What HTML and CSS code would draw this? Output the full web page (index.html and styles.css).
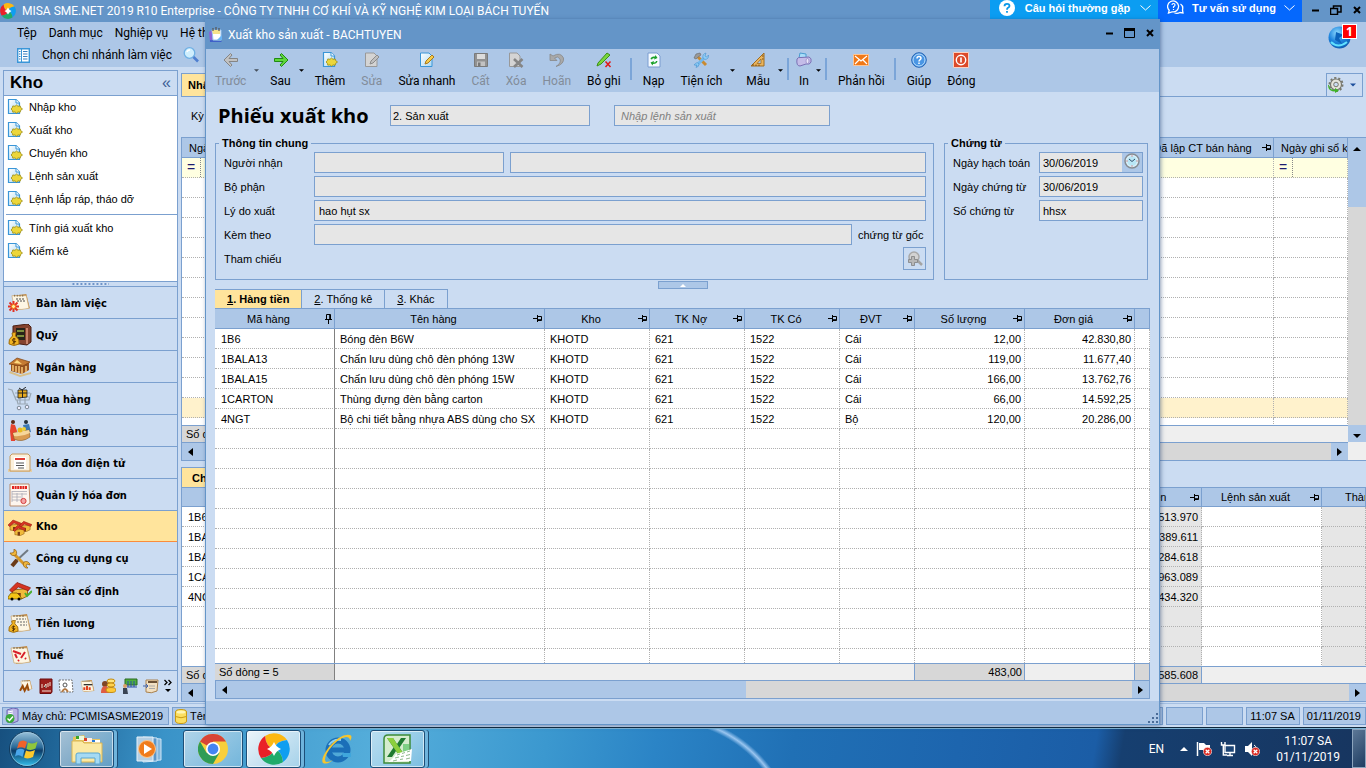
FILE: index.html
```html
<!DOCTYPE html>
<html lang="vi">
<head>
    <meta charset="UTF-8">
    <title>MISA SME.NET 2019 R10 Enterprise</title>
    <link rel="stylesheet" href="styles.css">
</head>
<body>
    <!-- icon sprite -->
    <svg class="sprite" aria-hidden="true">
        <defs>
            <linearGradient id="orb" x1="0" y1="0" x2="0" y2="1"><stop offset="0" stop-color="#9cc4dc"/><stop offset=".45" stop-color="#2a6a98"/><stop offset=".55" stop-color="#0c3c68"/><stop offset="1" stop-color="#35c3f0"/></linearGradient>
            <linearGradient id="docfill" x1="0" y1="0" x2="1" y2="1"><stop offset="0" stop-color="#fff"/><stop offset="1" stop-color="#a9d8f3"/></linearGradient>
            <radialGradient id="globe" cx=".4" cy=".3" r=".8"><stop offset="0" stop-color="#8fdcff"/><stop offset=".5" stop-color="#1d83dd"/><stop offset="1" stop-color="#0a55a8"/></radialGradient>
        </defs>
        <symbol id="misa" viewBox="0 0 32 32">
            <path d="M16 16Q8 14 7 3A16 16 0 0 1 29 7Q18 8 16 16Z" fill="#fcb813"/>
            <path d="M16 16Q8 14 7 3A16 16 0 0 1 29 7Q18 8 16 16Z" fill="#0f9ef0" transform="rotate(90 16 16)"/>
            <path d="M16 16Q8 14 7 3A16 16 0 0 1 29 7Q18 8 16 16Z" fill="#20ab6b" transform="rotate(180 16 16)"/>
            <path d="M16 16Q8 14 7 3A16 16 0 0 1 29 7Q18 8 16 16Z" fill="#ea2127" transform="rotate(270 16 16)"/>
            <path d="M16 9Q18 14 23 16Q18 18 16 23Q14 18 9 16Q14 14 16 9Z" fill="#fff"/>
        </symbol>
        <symbol id="doc-new" viewBox="0 0 16 16">
            <path d="M1.500.500H9L12.500 4V14.500H1.500Z" fill="url(#docfill)" stroke="#3a96d8" stroke-width="1.200"/>
            <path d="M9 .500V4H12.500" fill="#fff" stroke="#3a96d8"/>
            <path d="M9.500 6l1.500 1.300 2.200-.4.500 1.700 1.800 1.400-1.800 1.300-.5 1.900-2.200-.3-1.500 1.300-1.500-1.300-2.200.3-.5-1.900L4 10l1.300-1.400.5-1.700 2.200.4Z" fill="#ecd63a" stroke="#9a8c10" stroke-width=".8"/>
        </symbol>
        <symbol id="pin" viewBox="0 0 10 9">
            <path d="M0 4.500H4M4.500 1V8M4.500 2.500H8.500V6.500H4.500M4.500 5.700H8.500" fill="none" stroke="#000"/>
        </symbol>
        <symbol id="tri-l" viewBox="0 0 5 8"><path d="M5 0V8L0 4Z"/></symbol>
        <symbol id="tri-r" viewBox="0 0 5 8"><path d="M0 0V8L5 4Z"/></symbol>
        <symbol id="tri-u" viewBox="0 0 8 4"><path d="M0 4H8L4 0Z"/></symbol>
        <symbol id="tri-d" viewBox="0 0 8 4"><path d="M0 0H8L4 4Z"/></symbol>
        <symbol id="calendar" viewBox="0 0 24 20">
            <path d="M4 3L19 1L23 17L8 19Z" fill="#c28a45"/>
            <path d="M3 3H19L22 17Q14 19 6 18Z" fill="#fdf6e4" stroke="#c9a671" stroke-width=".7"/>
            <path d="M6 2V4M9 2V4M12 2V4M15 2V4" stroke="#7a6544"/>
        </symbol>
        <symbol id="bag" viewBox="0 0 12 14">
            <path d="M4 1L8 0L7.500 4Q12 7 11 12Q6 15 1 12Q0 7 4.500 4Z" fill="#f0b323" stroke="#8c5b06" stroke-width=".8"/>
            <path d="M7.500 7Q4.500 6 4.500 8T7 9.500T4.500 11.500M6 6V12.500" fill="none" stroke="#5c3500"/>
        </symbol>
        <symbol id="house" viewBox="0 0 14 12">
            <path d="M2 6V11L8 12L12 10V5Z" fill="#f0ba3a" stroke="#8f5d12" stroke-width=".6"/>
            <path d="M5 8H7.500V12H5Z" fill="#7a3c10"/>
            <path d="M0 6L5 1L14 4.500L12.500 6.500L6 4L1.500 7.500Z" fill="#d63422" stroke="#8e1d10" stroke-width=".5"/>
        </symbol>
        <symbol id="badge-x" viewBox="0 0 9 9">
            <circle cx="4.500" cy="4.500" r="4.200" fill="#dc2a22" stroke="#fff" stroke-width=".6"/>
            <path d="M2.700 2.700L6.300 6.300M6.300 2.700L2.700 6.300" stroke="#fff" stroke-width="1.300"/>
        </symbol>
    </svg>

    <header class="titlebar">
        <svg class="app-logo" width="16" height="16"><use href="#misa"/></svg>
        <h1 class="app-title">MISA SME.NET 2019 R10 Enterprise - CÔNG TY TNHH CƠ KHÍ VÀ KỸ NGHỆ KIM LOẠI BÁCH TUYẾN</h1>
        <button class="promo faq">
            <svg width="16" height="16" viewBox="0 0 16 16"><circle cx="8" cy="8" r="8" fill="#fff"/><path d="M5.500 6.200Q5.500 3.800 8 3.800T10.500 6Q10.500 7.200 8.700 8Q8 8.500 8 9.800M8 11V12.800" fill="none" stroke="#0897e8" stroke-width="1.800"/></svg>
            <span>Câu hỏi thường gặp</span>
            <svg width="11" height="6" viewBox="0 0 11 6"><path d="M.500.500L5.500 5L10.500.500" fill="none" stroke="#fff"/></svg>
        </button>
        <button class="promo advice">
            <svg width="17" height="15" viewBox="0 0 17 15"><path d="M1.500 13L2.200 10.300A5.500 5.500 0 1 1 5 11.800Z" fill="none" stroke="#fff" stroke-width="1.300"/><path d="M5 5Q5 3.500 6.500 3.500T8 5Q8 6 6.500 6.800V8M6.500 9V10" fill="none" stroke="#fff" stroke-width="1.200"/><path d="M13.500 4Q16.500 6 15.500 10L16 13L13 12.500Q10.500 14 7.500 13" fill="none" stroke="#fff" stroke-width="1.300"/></svg>
            <span>Tư vấn sử dụng</span>
            <svg width="11" height="6" viewBox="0 0 11 6"><path d="M.500.500L5.500 5L10.500.500" fill="none" stroke="#fff"/></svg>
        </button>
        <div class="win-controls">
            <button aria-label="Thu nhỏ"><svg width="8" height="10" viewBox="0 0 8 10"><path d="M1 5.500H8" stroke="#000" stroke-width="2"/></svg></button>
            <button aria-label="Khôi phục"><svg width="12" height="10" viewBox="0 0 12 10"><path d="M3.500 3V1H11V7H8M.500 3.500H7.500V9.500H.500Z" fill="none" stroke="#000" stroke-width="1.500"/></svg></button>
            <button aria-label="Đóng cửa sổ"><svg width="8" height="8" viewBox="0 0 8 8"><path d="M1 1L7 7M7 1L1 7" stroke="#000" stroke-width="2"/></svg></button>
        </div>
    </header>

    <div class="menu-area">
        <div class="menu-rows">
            <nav class="menubar">
                <a href="#">Tệp</a><a href="#">Danh mục</a><a href="#">Nghiệp vụ</a><a href="#">Hệ thống</a>
            </nav>
            <div class="branch-bar">
                <button>
                    <svg width="13" height="15" viewBox="0 0 13 15"><path d="M.700.700H12.300V14.300H.700Z" fill="#fff" stroke="#3a96d8" stroke-width="1.400"/><path d="M4.500 1V14" stroke="#3a96d8"/><path d="M2 3.500H3.500M2 6H3.500M2 8.500H3.500M2 11H3.500M6 3.500H10.500M6 6H10.500M6 8.500H10.500M6 11H10.500" stroke="#3a7fc0" stroke-width="1.200"/></svg>
                    <span>Chọn chi nhánh làm việc</span>
                </button>
                <button aria-label="Tìm kiếm">
                    <svg width="16" height="16" viewBox="0 0 16 16"><circle cx="6.500" cy="6" r="5.300" fill="#cfeefd" stroke="#6fb0e4" stroke-width="1.300"/><path d="M4 5Q4.500 3 7 3" fill="none" stroke="#fff" stroke-width="1.500"/><path d="M10.500 10L15 14.500" stroke="#4f7fd0" stroke-width="2.600"/></svg>
                </button>
            </div>
        </div>
        <div class="notice">
            <svg width="23" height="23" viewBox="0 0 23 23"><circle cx="11.500" cy="11.500" r="11" fill="url(#globe)"/><path d="M8 6L16 9L11 12L14 18L7 14Z" fill="#0b63bb"/><path d="M3 16Q10 23 19 16" fill="none" stroke="#5fe0ff" stroke-width="2"/></svg>
            <span class="notice-count">1</span>
        </div>
    </div>

    <main class="main">
        <aside class="sidebar">
            <h2 class="side-head">Kho <span>«</span></h2>
            <ul class="side-list">
                <li><a href="#"><svg width="16" height="16"><use href="#doc-new"/></svg>Nhập kho</a></li>
                <li><a href="#"><svg width="16" height="16"><use href="#doc-new"/></svg>Xuất kho</a></li>
                <li><a href="#"><svg width="16" height="16"><use href="#doc-new"/></svg>Chuyển kho</a></li>
                <li><a href="#"><svg width="16" height="16"><use href="#doc-new"/></svg>Lệnh sản xuất</a></li>
                <li><a href="#"><svg width="16" height="16"><use href="#doc-new"/></svg>Lệnh lắp ráp, tháo dỡ</a></li>
                <li class="split"><a href="#"><svg width="16" height="16"><use href="#doc-new"/></svg>Tính giá xuất kho</a></li>
                <li><a href="#"><svg width="16" height="16"><use href="#doc-new"/></svg>Kiểm kê</a></li>
            </ul>
            <div class="side-grip"></div>
            <nav class="side-nav">
                <a href="#"><svg width="24" height="20" viewBox="0 0 24 20"><use href="#calendar" width="24" height="18"/><path d="M8 6H17M9 8H18" stroke="#4a4a4a" stroke-dasharray="2 1"/><path d="M5.500 8V19M0 13.500H11M1.500 9.500L9.500 17.500M9.500 9.500L1.500 17.500" stroke="#e23325" stroke-width="2"/><circle cx="5.500" cy="13.500" r="2" fill="#fff0a0" stroke="#f08010"/></svg>Bàn làm việc</a>
                <a href="#"><svg width="24" height="22" viewBox="0 0 24 22"><path d="M5 2L20 0L23 3V18L19 21L5 19Z" fill="#85432e" stroke="#4c2014"/><path d="M8 4L17 4V16H8Z" fill="#28231a"/><path d="M9 7H16M9 12H16" stroke="#7d8f3d" stroke-width="2"/><path d="M19 4V20" stroke="#c7836b" stroke-width="2"/><use href="#bag" x="0" y="8" width="12" height="14"/></svg>Quỹ</a>
                <a href="#"><svg width="24" height="20" viewBox="0 0 24 20"><path d="M2 14L12 18L23 15V17L12 20L1 16Z" fill="#d9c08a"/><path d="M3 7V14L14 17L21 13V6Z" fill="#9a5420"/><path d="M5 8V14M8 9V15M11 9V16M14 10V17M18 9V15" stroke="#f7c877" stroke-width="1.500"/><path d="M1 7L9 1L22 5L15 9Z" fill="#c57a32" stroke="#7c4010" stroke-width=".7"/><path d="M6 6L9 3L14 7Z" fill="#ffdb80"/></svg>Ngân hàng</a>
                <a href="#"><svg width="24" height="24" viewBox="0 0 24 24"><path d="M0 2L4 3L8 13H21L23 6M7 10H21M9 13L10 17H20M7 6H22M12 6V17M17 6V17" fill="none" stroke="#9aa7b3" stroke-width="1.200"/><path d="M10 3H19V10L10 11Z" fill="#e7aa1d" stroke="#222" stroke-width=".8"/><path d="M14.500 3V11M10 6H19M11 1L14 3L18 0" fill="none" stroke="#222"/><circle cx="11" cy="21" r="1.800" fill="#eef" stroke="#7b8894"/><circle cx="19" cy="20" r="1.800" fill="#eef" stroke="#7b8894"/></svg>Mua hàng</a>
                <a href="#"><svg width="24" height="24" viewBox="0 0 24 24"><circle cx="5" cy="3" r="2" fill="#5b2a16"/><path d="M3 5L7 6L9 12L7 22H3L2 12Z" fill="#e7442e"/><circle cx="18" cy="3" r="2" fill="#24303c"/><path d="M15 6L21 5L23 13L17 14Z" fill="#3c78b4"/><path d="M5 14L21 11L22 18Q14 24 6 20Z" fill="#d99c52" stroke="#8c5a22" stroke-width=".6"/><path d="M5 14L21 11L22 14Q14 18 6 17Z" fill="#f6d79c"/><circle cx="12" cy="11" r="2.500" fill="#e9ba1b"/><circle cx="16" cy="10" r="2" fill="#f0d034"/></svg>Bán hàng</a>
                <a href="#"><svg width="24" height="20" viewBox="0 0 24 20"><path d="M0 16H24V19H0Z" fill="#e4cfa8"/><path d="M2 3L4 1H20L22 3V18H2Z" fill="#fbf0dc" stroke="#c69a5c"/><path d="M6 4H18V16H6Z" fill="#fff"/><path d="M7 6H17" stroke="#e23c34" stroke-width="2"/><path d="M8 10H16M8 12.500H16M10 15H16" stroke="#555" stroke-width="1.200"/></svg>Hóa đơn điện tử</a>
                <a href="#"><svg width="24" height="24" viewBox="0 0 24 24"><path d="M2 1H21L22 20L18 23H2Z" fill="#fdf5ee" stroke="#b98a6a"/><path d="M4 4.500H19" stroke="#e1241e" stroke-width="3" stroke-dasharray="2 .6"/><path d="M4 8.500H19M4 11H19M4 14H13M4 17H13M4 8V19M9 10V19M14 10V17" stroke="#a9a9b5" stroke-width=".8"/><circle cx="15.500" cy="18" r="2.600" fill="#f3a6a6" stroke="#d53c3c"/></svg>Quản lý hóa đơn</a>
                <a href="#" class="current"><svg width="24" height="20" viewBox="0 0 24 20"><use href="#house" x="0" y="2" width="14" height="12"/><use href="#house" x="11" y="3" width="13" height="12"/><use href="#house" x="5" y="7" width="13" height="12"/></svg>Kho</a>
                <a href="#"><svg width="24" height="20" viewBox="0 0 24 20"><path d="M20 1L8 12" stroke="#707a84" stroke-width="2"/><path d="M9 11L4 17" stroke="#6b3b18" stroke-width="4"/><path d="M6 5L17 16" stroke="#d89826" stroke-width="3"/><path d="M2 4A4 4 0 0 0 8 6A4 4 0 0 0 6 0L6 3L4 4ZM20 19L18 17L19 15L22 16A4 4 0 0 0 16 13A4 4 0 0 0 18 19Z" fill="#efb53a" stroke="#8c5a10" stroke-width=".7"/></svg>Công cụ dụng cụ</a>
                <a href="#"><svg width="24" height="20" viewBox="0 0 24 20"><use href="#house" x="1" y="0" width="22" height="18"/><path d="M17 12L19 15L24 10" fill="none" stroke="#4caf30" stroke-width="2"/><path d="M0 16L3 12H9L12 15L14 18H0Z" fill="#f4c416" stroke="#7b5d00" stroke-width=".8"/><circle cx="4" cy="18" r="1.500"/><circle cx="11" cy="18" r="1.500"/></svg>Tài sản cố định</a>
                <a href="#"><svg width="24" height="20" viewBox="0 0 24 20"><use href="#calendar" width="24" height="20"/><path d="M8 6H18M9 9H19M12 12H19" stroke="#666" stroke-dasharray="2 1"/><use href="#bag" x="0" y="7" width="11" height="13"/></svg>Tiền lương</a>
                <a href="#"><svg width="24" height="20" viewBox="0 0 24 20"><use href="#calendar" width="24" height="20"/><path d="M5 6L13 9M7 9L9 13M13 13L17 7M10 16L11 15M17 13L18 14" stroke="#d8202a" stroke-width="2"/></svg>Thuế</a>
            </nav>
            <div class="side-more">
                <svg width="16" height="14" viewBox="0 0 24 20"><use href="#calendar" width="24" height="17"/><path d="M3 17L7 10L10 17L14 9L16 17" fill="none" stroke="#9a4a08" stroke-width="3"/></svg>
                <svg width="14" height="16" viewBox="0 0 14 16"><path d="M1 1H13V14L12 15.500H1Z" fill="#9c1f1d" stroke="#6c0d0d"/><path d="M3 10V6M5 9L7 6V10M9 5V9M11 4V8M3 13H12" stroke="#f3e2d4"/></svg>
                <svg width="16" height="15" viewBox="0 0 16 15"><path d="M1 1H14L15 13H2Z" fill="#fff" stroke="#777" stroke-dasharray="2 1"/><circle cx="7" cy="6" r="2" fill="none" stroke="#555"/><path d="M4 13Q7 7 10 13" fill="none" stroke="#b47a44" stroke-width="2"/></svg>
                <svg width="16" height="14" viewBox="0 0 24 20"><use href="#calendar" width="24" height="20"/><path d="M7 8H20" stroke="#333" stroke-width="2"/><path d="M8 16V12M12 16V10M16 16V12" stroke="#e04020" stroke-width="3"/></svg>
                <svg width="16" height="16" viewBox="0 0 16 16"><circle cx="5" cy="6" r="3" fill="#7e4526"/><path d="M1 15Q1 8 5 8T9 15Z" fill="#df5c43"/><ellipse cx="11" cy="3" rx="4" ry="2" fill="#ffe47a" stroke="#c28b12"/><ellipse cx="11" cy="7" rx="4" ry="2" fill="#ffd24c" stroke="#c28b12"/><ellipse cx="11" cy="12" rx="5" ry="2.500" fill="#ffc938" stroke="#c28b12"/></svg>
                <svg width="17" height="16" viewBox="0 0 17 16"><path d="M4 1H16V7H4Z" fill="#4cae3e" stroke="#2a6a20"/><path d="M6 9H16M7 3V9M10 3V9M13 3V9" stroke="#2d4fa8"/><circle cx="4" cy="8" r="2" fill="#dba06a"/><path d="M2 10H6L7 16H2Z" fill="#3a4454"/></svg>
                <svg width="16" height="15" viewBox="0 0 16 15"><path d="M3 1H15L14 12Q8 15 3 13Z" fill="#f2e0c2" stroke="#a9814e"/><path d="M5 3H14" stroke="#6a5035" stroke-width="2"/><path d="M6 7H12M6 9.500H12" stroke="#aaa"/><path d="M0 7H5M3 5L5 7L3 9" fill="none" stroke="#3e63b0"/></svg>
                <svg width="8" height="14" viewBox="0 0 8 14"><path d="M.500 1L3 3.500L.500 6M4.500 1L7 3.500L4.500 6" fill="none" stroke="#000" stroke-width="1.300"/><path d="M1 10H7L4 13Z"/></svg>
            </div>
        </aside>

        <section class="workspace">
            <div class="doc-tabs">
                <button class="tab active">Nhập, xuất kho</button>
                <button class="tools" aria-label="Tùy chọn">
                    <svg width="16" height="16" viewBox="0 0 16 16"><circle cx="8" cy="7.500" r="5.500" fill="#e5e5dd" stroke="#77776c" stroke-width="1.200"/><circle cx="8" cy="7.500" r="6.600" fill="none" stroke="#77776c" stroke-width="1.800" stroke-dasharray="2.200 1.950"/><circle cx="8" cy="7.500" r="2.300" fill="#cbdcf2" stroke="#77776c"/><path d="M1 8Q1 13 7 13V11L11 13.500L7 16V14.500Q0 14.500 0 8Z" fill="#3fb428"/></svg>
                    <svg width="6" height="4" class="blue"><use href="#tri-d"/></svg>
                </button>
            </div>
            <div class="period">Kỳ</div>
            <div class="list-grid">
                <div class="grid-main">
                    <div class="grid-body">
                        <table class="grid master">
                            <colgroup><col class="w90"><col><col class="w130"><col class="w74"></colgroup>
                            <thead><tr><th class="start">Ngày hạch toán</th><th></th><th>Đã lập CT bán hàng<svg width="10" height="9"><use href="#pin"/></svg></th><th class="start">Ngày ghi sổ kho</th></tr></thead>
                            <tbody>
                                <tr class="filter"><td><span>=</span></td><td></td><td></td><td><span>=</span></td></tr>
                                <tr><td></td><td></td><td></td><td></td></tr>
                                <tr><td></td><td></td><td></td><td></td></tr>
                                <tr><td></td><td></td><td></td><td></td></tr>
                                <tr><td></td><td></td><td></td><td></td></tr>
                                <tr><td></td><td></td><td></td><td></td></tr>
                                <tr><td></td><td></td><td></td><td></td></tr>
                                <tr><td></td><td></td><td></td><td></td></tr>
                                <tr><td></td><td></td><td></td><td></td></tr>
                                <tr><td></td><td></td><td></td><td></td></tr>
                                <tr><td></td><td></td><td></td><td></td></tr>
                                <tr><td></td><td></td><td></td><td></td></tr>
                                <tr class="picked"><td></td><td></td><td></td><td></td></tr>
                                <tr><td></td><td></td><td></td><td></td></tr>
                            </tbody>
                        </table>
                    </div>
                    <div class="sum-bar"><span>Số dòng</span></div>
                    <div class="hscroll"><button aria-label="Cuộn trái"><svg width="5" height="8"><use href="#tri-l"/></svg></button><i></i><button aria-label="Cuộn phải"><svg width="5" height="8"><use href="#tri-r"/></svg></button></div>
                </div>
                <div class="vscroll"><button aria-label="Cuộn lên"><svg width="8" height="4"><use href="#tri-u"/></svg></button><i></i><button aria-label="Cuộn xuống"><svg width="8" height="4"><use href="#tri-d"/></svg></button></div>
            </div>
            <div class="detail">
                <button class="tab active">Chi tiết</button>
                <div class="grid-body">
                    <table class="grid">
                        <colgroup><col class="w90"><col><col class="w110"><col class="w120"><col class="w44"></colgroup>
                        <thead><tr><th></th><th></th><th>Thành tiền<svg width="10" height="9"><use href="#pin"/></svg></th><th>Lệnh sản xuất<svg width="10" height="9"><use href="#pin"/></svg></th><th class="late">Thành phẩm</th></tr></thead>
                        <tbody>
                            <tr><td>1B6</td><td></td><td class="num gray">513.970</td><td></td><td class="gray"></td></tr>
                            <tr><td>1BALA13</td><td></td><td class="num gray">1.389.611</td><td></td><td class="gray"></td></tr>
                            <tr><td>1BALA15</td><td></td><td class="num gray">2.284.618</td><td></td><td class="gray"></td></tr>
                            <tr><td>1CARTON</td><td></td><td class="num gray">963.089</td><td></td><td class="gray"></td></tr>
                            <tr><td>4NGT</td><td></td><td class="num gray">2.434.320</td><td></td><td class="gray"></td></tr>
                            <tr><td></td><td></td><td class="gray"></td><td></td><td class="gray"></td></tr>
                            <tr><td></td><td></td><td class="gray"></td><td></td><td class="gray"></td></tr>
                            <tr><td></td><td></td><td class="gray"></td><td></td><td class="gray"></td></tr>
                        </tbody>
                    </table>
                </div>
                <div class="sum-bar"><span>Số dòng = 5</span><b>7.585.608</b></div>
                <div class="hscroll"><button aria-label="Cuộn trái"><svg width="5" height="8"><use href="#tri-l"/></svg></button><i></i><button aria-label="Cuộn phải"><svg width="5" height="8"><use href="#tri-r"/></svg></button></div>
            </div>
        </section>
    </main>

    <footer class="statusbar">
        <span class="server"><svg width="14" height="16" viewBox="0 0 14 16"><path d="M2 2L8 0L13 1V13L8 15L2 14Z" fill="#b7b2e4" stroke="#6e68b4"/><path d="M3 4L8 3M3 6L8 5" stroke="#fff"/><circle cx="5" cy="10.500" r="4.500" fill="#3aa93a"/><path d="M2.500 10.500L4.500 12.500L8 8.500" fill="none" stroke="#fff" stroke-width="1.400"/></svg>Máy chủ: PC\MISASME2019</span>
        <span class="database"><svg width="12" height="15" viewBox="0 0 12 15"><path d="M.500 3Q.500.500 6 .500T11.500 3V12Q11.500 14.500 6 14.500T.500 12Z" fill="#fbdf62" stroke="#c99a12"/><path d="M.500 7.500Q6 10 11.500 7.500" fill="none" stroke="#c99a12"/><ellipse cx="6" cy="3" rx="4.500" ry="1.600" fill="#fff6b4"/></svg>Tên CSDL: BACHTUYEN</span>
        <span class="num">NUM</span><span class="blank"></span><span class="blank"></span><span class="clock">11:07 SA</span><span class="clock">01/11/2019</span>
    </footer>

    <section class="dialog" role="dialog" aria-labelledby="dlg-title">
        <header class="dlg-title">
            <svg width="14" height="16" viewBox="0 0 14 16"><path d="M0 5L4 3L4 13L1 15Z" fill="#8a62d8"/><path d="M1 13L12 14L13 15H1Z" fill="#3f60c8"/><path d="M3 3H12L12 13H4Z" fill="#fff" stroke="#9cc6ee"/><path d="M8 13L13 8V13Z" fill="#6ab4f4"/><path d="M3 3H11V7H4Z" fill="#f6e28a"/><path d="M4 1V4M7 0V3M10 1V4" stroke="#555" stroke-width="1.200"/></svg>
            <h2 id="dlg-title">Xuất kho sản xuất - BACHTUYEN</h2>
            <div class="win-controls">
                <button aria-label="Thu nhỏ"><svg width="8" height="10" viewBox="0 0 8 10"><path d="M1 5.500H8" stroke="#000" stroke-width="2"/></svg></button>
                <button aria-label="Phóng to"><svg width="11" height="10" viewBox="0 0 11 10"><path d="M.500 1.500H10.500V9.500H.500Z" fill="none" stroke="#000"/><path d="M0 1.500H11" stroke="#000" stroke-width="3"/></svg></button>
                <button aria-label="Đóng cửa sổ"><svg width="8" height="8" viewBox="0 0 8 8"><path d="M1 1L7 7M7 1L1 7" stroke="#000" stroke-width="2"/></svg></button>
            </div>
        </header>
        <div class="toolbar">
            <button disabled><svg width="16" height="16" viewBox="0 0 16 16"><path d="M1 8L7.500 1.500L9 3L6 6.500H14.500V9.500H6L9 13L7.500 14.500Z" fill="#c2c2c2" stroke="#858585"/></svg>Trước</button>
            <i class="drop off"><svg width="5" height="3"><use href="#tri-d"/></svg></i>
            <button><svg width="16" height="16" viewBox="0 0 16 16"><path d="M15 8L8.500 1.500L7 3L10 6.500H1.500V9.500H10L7 13L8.500 14.500Z" fill="#5fd83c" stroke="#218a12"/></svg>Sau</button>
            <i class="drop"><svg width="5" height="3"><use href="#tri-d"/></svg></i>
            <button><svg width="16" height="16"><use href="#doc-new"/></svg>Thêm</button>
            <button disabled><svg width="16" height="16" viewBox="0 0 16 16"><path d="M1.500 1H10L13 4V14.500H1.500Z" fill="#d4d4d4" stroke="#999"/><path d="M6 12L7 9L13 3L15 5L9 11Z" fill="#c0c0c0" stroke="#8c8c8c"/></svg>Sửa</button>
            <button><svg width="16" height="16" viewBox="0 0 16 16"><path d="M1.500 1H10L13 4V14.500H1.500Z" fill="url(#docfill)" stroke="#3a96d8"/><path d="M6 12L7 9L13 3L15 5L9 11Z" fill="#f6cc4c" stroke="#a97a1c"/></svg>Sửa nhanh</button>
            <button disabled><svg width="16" height="16" viewBox="0 0 16 16"><path d="M1.500 1.500H14.500V14.500H1.500Z" fill="#929292" stroke="#7a7a7a"/><path d="M4 2H12V7H4Z" fill="#dcdcdc"/><path d="M4 9.500H12V14H4Z" fill="#c2c2c2"/><path d="M5 10.500H7.500V14H5Z" fill="#777"/></svg>Cất</button>
            <button disabled><svg width="16" height="16" viewBox="0 0 16 16"><path d="M1.500 1H9L12 4V14.500H1.500Z" fill="#d4d4d4" stroke="#999"/><path d="M6 7L14.500 15M14.500 7L6 15" stroke="#858585" stroke-width="2.600"/></svg>Xóa</button>
            <button disabled><svg width="16" height="16" viewBox="0 0 16 16"><path d="M1 2V8.500H8L5.500 6Q9 3.500 11 7Q12.500 11 7 14.500Q15.500 12 14.500 6Q11.500-.500 4 4Z" fill="#a9a9a9" stroke="#888" stroke-width=".8"/></svg>Hoãn</button>
            <button><svg width="16" height="16" viewBox="0 0 16 16"><path d="M1 14L2 11L11 1L14 3L5 12Z" fill="#79d63c" stroke="#3c8f18"/><path d="M9.500 9.500L14.500 15M14.500 9.500L9.500 15" stroke="#e01818" stroke-width="1.500"/></svg><span>Bỏ <u>g</u>hi</span></button>
            <i class="sep"></i>
            <button><svg width="16" height="16" viewBox="0 0 16 16"><path d="M2 1H11L14 4V15H2Z" fill="#f5faff" stroke="#7a9cd0"/><path d="M4.500 7Q5 4 9 4.500L9.500 3L11.500 6L8 7.500L8.500 6Q6 6 6 7.500ZM11.500 9Q11 12 7 12L6.500 13.500L4.500 10.500L8 9L7.500 10.500Q10 10.500 10 9Z" fill="#18a028"/></svg>Nạp</button>
            <button><svg width="16" height="16" viewBox="0 0 16 16"><path d="M5 5L13 13" stroke="#c98a30" stroke-width="3"/><path d="M1 6L3 2L7 1L8 3L5 5L3 7Z" fill="#999" stroke="#666" stroke-width=".6"/><path d="M11 6L3 14" stroke="#72b8ec" stroke-width="3"/><path d="M10 6Q9 2 13 1L12 4L13.500 5L15.500 3Q16 7 12 7.500ZM1 13Q4 9 6 12Q6 15 3 15.500L4 13Z" fill="#8cccf6" stroke="#4a90cc" stroke-width=".6"/></svg>Tiện ích</button>
            <i class="drop"><svg width="5" height="3"><use href="#tri-d"/></svg></i>
            <button><svg width="16" height="16" viewBox="0 0 16 16"><path d="M1 14L14 1V14Z" fill="#eab45c" stroke="#a06c20"/><path d="M7 11.500L11 7V11.500Z" fill="#adc7e7" stroke="#a06c20" stroke-width=".8"/><path d="M3 12V14M6 12.500V14M9 12.500V14M12 4H13.500M12 7H13.500" stroke="#7b4c10"/></svg>Mẫu</button>
            <i class="drop"><svg width="5" height="3"><use href="#tri-d"/></svg></i>
            <i class="sep"></i>
            <button class="narrow"><svg width="16" height="16" viewBox="0 0 16 16"><path d="M3 6L4 1L10 2V7Z" fill="#a9dcf8" stroke="#4a9cd0"/><path d="M1 7Q2 5 5 5.500L13 5Q16 6 15 10Q14 13 10 12L4 14Q0 14 1 7Z" fill="#c4bce8" stroke="#7a70b4"/><ellipse cx="11.500" cy="9" rx="1.500" ry="2.500" fill="#eae6fa" stroke="#8c84c0" stroke-width=".7"/></svg>In</button>
            <i class="drop"><svg width="5" height="3"><use href="#tri-d"/></svg></i>
            <i class="sep"></i>
            <button><svg width="16" height="16" viewBox="0 0 16 16"><path d="M.500 2.500H15.500V13.500H.500Z" fill="#f07818" stroke="#fbc596"/><path d="M2 4L8 9L14 4M2 12L6 8M14 12L10 8" fill="none" stroke="#fff" stroke-width="1.200"/></svg>Phản hồi</button>
            <i class="sep"></i>
            <button><svg width="16" height="16" viewBox="0 0 16 16"><circle cx="8" cy="8" r="7.300" fill="#4a96e4" stroke="#2564b4"/><circle cx="8" cy="8" r="6" fill="none" stroke="#b8dcfa"/><path d="M6 6.500Q6 4.500 8 4.500T10 6.300Q10 7.300 8.700 8Q8 8.500 8 9.500M8 10.500V12" fill="none" stroke="#fff" stroke-width="1.500"/></svg>Giúp</button>
            <button><svg width="16" height="16" viewBox="0 0 16 16"><path d="M.500.500H15.500V15.500H.500Z" fill="#dc4a2a" stroke="#fbd0c0"/><circle cx="8" cy="8" r="4.700" fill="none" stroke="#fff" stroke-width="1.400"/><path d="M8 5.500V10.500" stroke="#fff" stroke-width="1.600"/></svg>Đóng</button>
        </div>
        <form class="dlg-body">
            <div class="voucher-head">
                <h3>Phiếu xuất kho</h3>
                <input class="type" type="text" value="2. Sản xuất" aria-label="Loại phiếu" readonly>
                <input class="order" type="text" placeholder="Nhập lệnh sản xuất" aria-label="Lệnh sản xuất" readonly>
            </div>
            <div class="info">
                <fieldset class="general">
                    <legend>Thông tin chung</legend>
                    <div class="row"><label for="receiver">Người nhận</label><input id="receiver" class="code" type="text" readonly><input type="text" aria-label="Tên người nhận" readonly></div>
                    <div class="row"><label for="dept">Bộ phận</label><input id="dept" type="text" readonly></div>
                    <div class="row"><label for="reason">Lý do xuất</label><input id="reason" type="text" value="hao hụt sx" readonly></div>
                    <div class="row"><label for="attach">Kèm theo</label><input id="attach" type="text" readonly><span class="unit">chứng từ gốc</span></div>
                    <div class="row ref"><label for="ref">Tham chiếu</label>
                        <button type="button" id="ref"><svg width="16" height="16" viewBox="0 0 16 16"><circle cx="7" cy="6" r="5" fill="#d2d2d2" stroke="#a8a8a8" stroke-width="1.500"/><path d="M10.500 9.500L15 14" stroke="#a4a4a4" stroke-width="2.500"/><path d="M4.500 5.500H7.500V8.500H10.500V11.500H7.500V14.500H4.500V11.500H1.500V8.500H4.500Z" fill="#b8b8b8" stroke="#808080" stroke-width=".8"/></svg></button>
                    </div>
                </fieldset>
                <fieldset class="voucher">
                    <legend>Chứng từ</legend>
                    <div class="row"><label for="posted">Ngày hạch toán</label><div class="date"><input id="posted" type="text" value="30/06/2019" readonly><button type="button" aria-label="Chọn giờ"><svg width="16" height="16" viewBox="0 0 16 16"><circle cx="8" cy="8" r="7" fill="#d9f1fa" stroke="#878c92" stroke-width="1.500"/><circle cx="8" cy="8" r="4.800" fill="#b9e6f5"/><path d="M5 6L8 8.500L11 6" fill="none" stroke="#34506a"/><path d="M8 2.500V3.500M8 12.500V13.500M2.500 8H3.500M12.500 8H13.500" stroke="#d04040"/></svg></button></div></div>
                    <div class="row"><label for="dated">Ngày chứng từ</label><input id="dated" type="text" value="30/06/2019" readonly></div>
                    <div class="row"><label for="number">Số chứng từ</label><input id="number" type="text" value="hhsx" readonly></div>
                </fieldset>
            </div>
            <button type="button" class="collapse" aria-label="Thu gọn"><svg width="6" height="3"><use href="#tri-u"/></svg></button>
            <div class="tabs">
                <button type="button" class="active"><u>1</u>. Hàng tiền</button><button type="button"><u>2</u>. Thống kê</button><button type="button"><u>3</u>. Khác</button>
            </div>
            <div class="items">
                <div class="grid-body">
                    <table class="grid">
                        <colgroup><col class="w120"><col><col class="w105"><col class="w95"><col class="w95"><col class="w75"><col class="w110"><col class="w110"><col class="w15"></colgroup>
                        <thead>
                            <tr>
                                <th>Mã hàng<svg width="9" height="10" viewBox="0 0 9 10"><path d="M1 5.500H8M2.500 5.500V.500H6.500V5.500M5.700 .500V5.500M4.500 6V10" fill="none" stroke="#000"/></svg></th>
                                <th>Tên hàng<svg width="10" height="9"><use href="#pin"/></svg></th>
                                <th>Kho<svg width="10" height="9"><use href="#pin"/></svg></th>
                                <th>TK Nợ<svg width="10" height="9"><use href="#pin"/></svg></th>
                                <th>TK Có<svg width="10" height="9"><use href="#pin"/></svg></th>
                                <th>ĐVT<svg width="10" height="9"><use href="#pin"/></svg></th>
                                <th>Số lượng<svg width="10" height="9"><use href="#pin"/></svg></th>
                                <th>Đơn giá<svg width="10" height="9"><use href="#pin"/></svg></th>
                                <th></th>
                            </tr>
                        </thead>
                        <tbody>
                            <tr><td>1B6</td><td>Bóng đèn B6W</td><td>KHOTD</td><td>621</td><td>1522</td><td>Cái</td><td class="num">12,00</td><td class="num">42.830,80</td><td></td></tr>
                            <tr><td>1BALA13</td><td>Chấn lưu dùng chô đèn phóng 13W</td><td>KHOTD</td><td>621</td><td>1522</td><td>Cái</td><td class="num">119,00</td><td class="num">11.677,40</td><td></td></tr>
                            <tr><td>1BALA15</td><td>Chấn lưu dùng chô đèn phóng 15W</td><td>KHOTD</td><td>621</td><td>1522</td><td>Cái</td><td class="num">166,00</td><td class="num">13.762,76</td><td></td></tr>
                            <tr><td>1CARTON</td><td>Thùng đựng đèn bằng carton</td><td>KHOTD</td><td>621</td><td>1522</td><td>Cái</td><td class="num">66,00</td><td class="num">14.592,25</td><td></td></tr>
                            <tr><td>4NGT</td><td>Bộ chi tiết bằng nhựa ABS dùng cho SX</td><td>KHOTD</td><td>621</td><td>1522</td><td>Bộ</td><td class="num">120,00</td><td class="num">20.286,00</td><td></td></tr>
                            <tr><td></td><td></td><td></td><td></td><td></td><td></td><td></td><td></td><td></td></tr>
                            <tr><td></td><td></td><td></td><td></td><td></td><td></td><td></td><td></td><td></td></tr>
                            <tr><td></td><td></td><td></td><td></td><td></td><td></td><td></td><td></td><td></td></tr>
                            <tr><td></td><td></td><td></td><td></td><td></td><td></td><td></td><td></td><td></td></tr>
                            <tr><td></td><td></td><td></td><td></td><td></td><td></td><td></td><td></td><td></td></tr>
                            <tr><td></td><td></td><td></td><td></td><td></td><td></td><td></td><td></td><td></td></tr>
                            <tr><td></td><td></td><td></td><td></td><td></td><td></td><td></td><td></td><td></td></tr>
                            <tr><td></td><td></td><td></td><td></td><td></td><td></td><td></td><td></td><td></td></tr>
                            <tr><td></td><td></td><td></td><td></td><td></td><td></td><td></td><td></td><td></td></tr>
                            <tr><td></td><td></td><td></td><td></td><td></td><td></td><td></td><td></td><td></td></tr>
                            <tr><td></td><td></td><td></td><td></td><td></td><td></td><td></td><td></td><td></td></tr>
                            <tr><td></td><td></td><td></td><td></td><td></td><td></td><td></td><td></td><td></td></tr>
                        </tbody>
                    </table>
                </div>
                <div class="totals"><span class="w120 count">Số dòng = 5</span><span class="rest"></span><span class="w110 sum">483,00</span><span class="w110"></span><span class="w15 end"></span></div>
                <div class="hscroll"><button type="button" aria-label="Cuộn trái"><svg width="5" height="8"><use href="#tri-l"/></svg></button><i></i><button type="button" aria-label="Cuộn phải"><svg width="5" height="8"><use href="#tri-r"/></svg></button></div>
            </div>
        </form>
        <footer class="dlg-foot">
            <svg width="12" height="12" viewBox="0 0 12 12"><path d="M9 1H11V3H9ZM5 5H7V7H5ZM9 5H11V7H9ZM1 9H3V11H1ZM5 9H7V11H5ZM9 9H11V11H9Z" fill="#4a6c98"/></svg>
        </footer>
    </section>

    <footer class="taskbar">
        <button class="start" aria-label="Start">
            <svg width="38" height="38" viewBox="0 0 38 38"><circle cx="19" cy="19" r="17.500" fill="url(#orb)" stroke="#123a5c"/><circle cx="19" cy="19" r="16.500" fill="none" stroke="#a9cfe4" stroke-opacity=".6"/><path d="M11 12Q15 9 19 12L17 18.500Q13 16 9 18.500Z" fill="#f0622a"/><path d="M20 12.500Q25 15 29.500 11.500L27.500 18.500Q23 21 18.500 19Z" fill="#8fc63c"/><path d="M8.500 20Q12.500 17.500 16.500 20L14.500 27Q11 24 7 26.500Z" fill="#4aa6ea"/><path d="M18 20.500Q22.500 22.500 27 20L25 27Q20 29.500 16 27.500Z" fill="#fcc82c"/></svg>
        </button>
        <button class="task stacked" aria-label="Explorer">
            <svg width="34" height="32" viewBox="0 0 34 32"><path d="M3 4L14 2L16 6H30V26H3Z" fill="#e8c560"/><path d="M6 3H14V7H6Z" fill="#eef8dc"/><path d="M6 3H9V6H6Z" fill="#3aa42a"/><path d="M14 5H22V9H14Z" fill="#fdeee8"/><path d="M14 5H17V8H14Z" fill="#d8402c"/><path d="M22 7H30V11H22Z" fill="#fff"/><path d="M22 7H25V9H22Z" fill="#2a7cd8"/><path d="M2 8H12L14 10H32V29H2Z" fill="#fbe9a4" stroke="#d9b552"/><path d="M6 31V22Q6 20 8 20H28Q30 20 30 22V31H25V25H11V31Z" fill="#a5daf4" stroke="#5aa6d0"/></svg>
        </button>
        <button class="task plain" aria-label="Media Player">
            <svg width="28" height="28" viewBox="0 0 28 28"><path d="M10 3L25 4V25L10 26Z" fill="#86b8dc" stroke="#cfe6f6"/><path d="M7 2L21 3V26L7 27Z" fill="#5a96c8" stroke="#cfe6f6"/><path d="M1 2H17V26H1Z" fill="#b4cfe4" stroke="#e6f2fa"/><circle cx="11" cy="14" r="8.500" fill="#f07c1c" stroke="#fbc890"/><path d="M8 9L16 14L8 19Z" fill="#fff"/></svg>
        </button>
        <button class="task" aria-label="Chrome">
            <svg width="30" height="30" viewBox="0 0 30 30"><circle cx="15" cy="15" r="15" fill="#f8cf3c"/><path d="M15 15L2 7.500A15 15 0 0 1 28 7.500H15Z" fill="#d84437"/><path d="M2 7.500A15 15 0 0 0 15 30L21.500 18.700L8.500 18.700Z" fill="#2f9c56"/><circle cx="15" cy="15" r="7" fill="#fff"/><circle cx="15" cy="15" r="5.400" fill="#4484f2"/></svg>
        </button>
        <button class="task stacked on" aria-label="MISA"><svg width="32" height="32"><use href="#misa"/></svg></button>
        <button class="task plain" aria-label="Internet Explorer">
            <svg width="32" height="32" viewBox="0 0 32 32"><circle cx="17" cy="17" r="9.500" fill="none" stroke="#1b6fb8" stroke-width="6"/><path d="M10 17H28" stroke="#1b6fb8" stroke-width="5"/><path d="M21 20H30V24H22Z" fill="#3fa6dc"/><path d="M8 12Q12 6 20 7" fill="none" stroke="#8ad0f4" stroke-width="2"/><path d="M2 30Q-1 26 8 14Q20 0 29 2Q32 3 29 8Q29 4 25 4Q17 5 8 17Q2 26 5 29Q9 29 12 27Q6 32 2 30Z" fill="#f6c52e"/></svg>
        </button>
        <button class="task stacked" aria-label="Excel">
            <svg width="30" height="30" viewBox="0 0 30 30"><path d="M5 1H27V29H1V5Q1 1 5 1Z" fill="#d5ecce" stroke="#3c8a3a" stroke-width="1.500"/><path d="M20 10H26V18H20Z" fill="#7ed085"/><path d="M4 4H10L14 10L18 4H23L16.500 13.500L22 22H16.500L13 17L9 23H4L10.500 13.500Z" fill="#1f7a30"/><path d="M4 4H10L22 22H16.500Z" fill="#8ccf3c"/><path d="M13 20L29 15L28 27L5 28Q9 26 13 20Z" fill="#fff"/><path d="M14 21L17 20M19 19.500L22 18.500M24 18L27 17M12 24L16 23M18 22.500L21 22M23 21.500L27 20.500M10 27L14 26M17 25.500L20 25M23 25L27 24" stroke="#8fb98e"/></svg>
        </button>
        <div class="tray">
            <span class="lang">EN</span>
            <svg width="8" height="4" fill="#fff"><use href="#tri-u"/></svg>
            <svg width="16" height="16" viewBox="0 0 16 16"><path d="M1.500 1V15" stroke="#fff" stroke-width="1.500"/><path d="M3 2H8L10 4H14V10H9L7 9H3Z" fill="#fff"/><use href="#badge-x" x="7" y="6" width="9" height="9"/></svg>
            <svg width="16" height="16" viewBox="0 0 16 16"><path d="M5 4.500H14.500V11.500H5ZM7 14.500H13M10 12V14" fill="#1c4475" stroke="#fff" stroke-width="1.400"/><path d="M1.500 1V4H5V1M3.300 4V14H7" fill="none" stroke="#fff" stroke-width="1.400"/></svg>
            <svg width="16" height="16" viewBox="0 0 16 16"><path d="M1 5H4L8 1V15L4 11H1Z" fill="#fff"/><path d="M10 4Q12 5 12 7" fill="none" stroke="#fff"/><use href="#badge-x" x="7" y="6" width="9" height="9"/></svg>
            <time>11:07 SA<br>01/11/2019</time>
            <button class="peek" aria-label="Show desktop"></button>
        </div>
    </footer>
</body>
</html>
```
FILE: styles.css
```css
* {
    box-sizing: border-box;
}

body {
    margin: 0;
    height: 100vh;
    display: flex;
    flex-direction: column;
    position: relative;
    overflow: hidden;
    background: #cbdcf2;
    color: #000;
    font: 11px/14px "Liberation Sans", Arial, sans-serif;
}

h1, h2, h3, ul {
    margin: 0;
    padding: 0;
    font-weight: normal;
}

button, input {
    font: inherit;
    color: inherit;
    margin: 0;
    padding: 0;
    border: 0;
    background: none;
    border-radius: 0;
}

a {
    color: inherit;
    text-decoration: none;
}

svg {
    flex: none;
}

.sprite {
    position: absolute;
    width: 0;
    height: 0;
}

/* main window title */
.titlebar {
    height: 22px;
    flex: none;
    display: flex;
    align-items: center;
    background: #6495c8;
}

.app-title {
    flex: 1;
    margin-left: 6px;
    color: #fff;
    font: 12px Roboto, "Noto Sans", sans-serif;
    white-space: nowrap;
}

.promo {
    align-self: flex-start;
    display: flex;
    align-items: center;
    justify-content: space-between;
    height: 23px;
    padding: 0 7px 8px 9px;
    color: #fff;
    font-weight: bold;
}

.faq {
    width: 168px;
    background: #0b9df2;
}

.advice {
    width: 144px;
    background: #0568fd;
}

.win-controls {
    display: flex;
    align-items: center;
    gap: 11px;
    padding: 0 5px 3px 9px;
}

.win-controls button {
    display: flex;
}

/* menus */
.menu-area {
    flex: none;
    height: 45px;
    display: flex;
    justify-content: space-between;
    background: #adc7e7;
    font: 12px/22px Roboto, "Noto Sans", sans-serif;
}

.menu-rows {
    padding-left: 17px;
}

.menubar {
    display: flex;
    gap: 12px;
}

.branch-bar {
    display: flex;
    gap: 11px;
}

.branch-bar button {
    display: flex;
    align-items: center;
    gap: 12px;
}

.notice {
    position: relative;
    margin: 4px 15px 0 0;
}

.notice-count {
    position: absolute;
    top: -2px;
    left: 14px;
    width: 15px;
    border: 1px solid #fff;
    background: #f00;
    color: #fff;
    font: bold 12px/13px "Open Sans", sans-serif;
    text-align: center;
}

/* sidebar */
.main {
    flex: 1;
    min-height: 0;
    display: flex;
    gap: 3px;
    padding: 3px 0 1px 3px;
}

.sidebar {
    flex: none;
    width: 175px;
    display: flex;
    flex-direction: column;
    border: 1px solid #7ba0cf;
}

.side-head {
    display: flex;
    justify-content: space-between;
    align-items: center;
    height: 25px;
    padding: 0 6px;
    border-bottom: 1px solid #7ba0cf;
    font: bold 17px "Liberation Sans", Arial, sans-serif;
}

.side-head span {
    color: #3d5f96;
    font: 16px/16px "Liberation Sans", Arial, sans-serif;
}

.side-list {
    flex: 1;
    min-height: 0;
    overflow: hidden;
    background: #fff;
    list-style: none;
}

.side-list a {
    display: flex;
    align-items: center;
    gap: 6px;
    height: 23px;
    padding: 0 0 2px 3px;
}

.side-list .split {
    margin: 3px 0 0 2px;
    border-top: 1px solid #7ba0cf;
    padding-top: 2px;
}

.side-list .split a {
    padding-left: 1px;
}

.side-grip {
    height: 5px;
    border-top: 1px solid #7ba0cf;
    background: linear-gradient(90deg, #6f94c8 2px, #fff 2px, #cbdcf2 3px) center / 4px 2px repeat-x content-box;
    padding: 1px 68px;
}

.side-nav a {
    display: flex;
    align-items: center;
    gap: 4px;
    height: 32px;
    padding: 1px 0 0 4px;
    border-top: 1px solid #7ba0cf;
    font: bold 11px "DejaVu Sans Condensed", "DejaVu Sans", sans-serif;
}

.side-nav .current {
    background: #ffe49c;
    border-bottom: 1px solid #fb8c3c;
}

.side-nav .current + a {
    border-top: 0;
}

.side-more {
    display: flex;
    align-items: center;
    justify-content: flex-end;
    gap: 5px;
    height: 31px;
    padding-right: 5px;
    border-top: 1px solid #7ba0cf;
}

/* workspace behind the dialog */
.workspace {
    flex: 1;
    min-width: 0;
    display: flex;
    flex-direction: column;
    padding-top: 3px;
}

.doc-tabs {
    display: flex;
    justify-content: space-between;
    height: 24px;
    margin-right: 3px;
    border-bottom: 1px solid #7ba0cf;
}

.tab {
    padding: 0 6px;
    border: 1px solid #7ba0cf;
    border-bottom: 0;
    font-weight: bold;
    background: #ffe49c;
}

.tools {
    display: flex;
    align-items: center;
    gap: 6px;
    width: 37px;
    height: 24px;
    padding-left: 1px;
    border: 1px solid #7ba0cf;
}

.blue {
    fill: #1c4f9c;
}

.period {
    height: 40px;
    padding: 12px 10px;
}

.list-grid {
    flex: 1;
    min-height: 0;
    display: flex;
    border: 1px solid #7ba0cf;
    border-right: 0;
}

.grid-main, .detail, .items {
    flex: 1;
    min-width: 0;
    min-height: 0;
    display: flex;
    flex-direction: column;
}

.detail {
    flex: none;
    height: 235px;
    margin-top: 6px;
    border-left: 1px solid #7ba0cf;
    border-bottom: 1px solid #7ba0cf;
}

.detail .tab {
    align-self: flex-start;
    height: 20px;
    padding: 0 10px;
    border-left: 0;
}

.detail .grid-body {
    border-top: 1px solid #7ba0cf;
}

.grid-body {
    flex: 1;
    min-height: 0;
    overflow: hidden;
    background: #fff;
}

.grid {
    width: 100%;
    table-layout: fixed;
    border-collapse: separate;
    border-spacing: 0;
}

.grid th {
    position: relative;
    height: 20px;
    padding: 0 16px 0 4px;
    border-right: 1px solid #7ba0cf;
    border-bottom: 1px solid #7ba0cf;
    background: #adc7e7;
    font-weight: normal;
    white-space: nowrap;
    overflow: hidden;
}

.detail .grid th {
    height: 19px;
}

.grid th svg {
    position: absolute;
    top: 5px;
    right: 1px;
}

.grid .start, .grid .late {
    padding: 0 0 0 7px;
    text-align: left;
}

.grid .late {
    padding-left: 23px;
}

.grid td {
    height: 20px;
    padding: 0 5px;
    border-right: 1px dotted #b0b0b0;
    border-bottom: 1px dotted #b0b0b0;
    white-space: nowrap;
    overflow: hidden;
}

.grid td:first-child {
    padding-left: 6px;
}

.grid .num {
    padding: 0 3px;
    text-align: right;
}

.grid .gray {
    background: #e6e6e6;
}

.grid .filter td {
    background: #ffffe1;
    color: #1c1c70;
    padding: 0;
}

.filter span {
    display: block;
    width: 19px;
    height: 19px;
    padding-left: 5px;
    border-right: 1px dotted #888;
    font-size: 14px;
    line-height: 19px;
}

.grid .picked td {
    background: #fff2cc;
}

.w15 { width: 15px; }
.w44 { width: 44px; }
.w74 { width: 74px; }
.w75 { width: 75px; }
.w90 { width: 90px; }
.w95 { width: 95px; }
.w105 { width: 105px; }
.w110 { width: 110px; }
.w120 { width: 120px; }
.w130 { width: 130px; }

.sum-bar {
    display: flex;
    justify-content: space-between;
    height: 18px;
    border-top: 1px solid #7ba0cf;
    border-bottom: 1px solid #7ba0cf;
    background: #efefef;
    line-height: 17px;
}

.sum-bar span, .sum-bar b {
    width: 110px;
    padding: 0 4px;
    background: #d7d7d7;
    font-weight: normal;
}

.sum-bar b {
    margin-right: 164px;
    padding: 0 3px;
    border-right: 1px solid #7ba0cf;
    text-align: right;
}

.hscroll {
    display: flex;
    height: 17px;
    background: #d7d7d7;
}

.hscroll button {
    width: 17px;
    background: #adc7e7;
}

.hscroll i {
    width: 52%;
    margin-right: auto;
    background: #adc7e7;
}

.vscroll {
    width: 18px;
    display: flex;
    flex-direction: column;
    padding-bottom: 18px;
    background: linear-gradient(#d7d7d7, #d7d7d7) content-box, #efefef;
}

.vscroll button {
    height: 17px;
    background: #adc7e7;
}

.vscroll i {
    height: 52px;
    margin-bottom: auto;
    background: #adc7e7;
}

/* status bar */
.statusbar {
    flex: none;
    display: flex;
    gap: 3px;
    height: 25px;
    padding: 3px 0 2px 2px;
    border-bottom: 1px solid #10283c;
    border-top: 1px solid #a4bfe2;
}

.statusbar span {
    display: flex;
    align-items: center;
    gap: 3px;
    padding: 0 2px;
    border: 1px solid #7ba0cf;
    background: #adc7e7;
    white-space: nowrap;
}

.statusbar .server {
    width: 167px;
}

.statusbar .database {
    flex: 1;
}

.statusbar .blank {
    width: 37px;
}

.statusbar .clock {
    padding: 0 4px 0 3px;
}

/* stock-out dialog */
.dialog {
    position: absolute;
    top: 19px;
    left: 205px;
    right: 206px;
    bottom: 43px;
    display: flex;
    flex-direction: column;
    border: 1px solid #6495c8;
    background: #cbdcf2;
    box-shadow: 1px 1px 4px rgba(30, 60, 110, .5);
}

.dlg-title {
    display: flex;
    align-items: center;
    gap: 5px;
    height: 29px;
    padding-left: 3px;
    background: #6495c8;
    color: #fff;
}

.dlg-title h2 {
    flex: 1;
    font: 12px Roboto, "Noto Sans", sans-serif;
}

.toolbar {
    display: flex;
    height: 43px;
    padding: 3px 0 0 1px;
    background: #adc7e7;
    font: 12px/16px Roboto, "Noto Sans", sans-serif;
}

.toolbar button {
    display: flex;
    flex-direction: column;
    align-items: center;
    gap: 5px;
    padding: 0 8px;
    white-space: nowrap;
}

.toolbar button:disabled {
    color: #828c99;
}

.toolbar .narrow {
    padding: 0 4px;
}

.drop {
    width: 8px;
    padding-top: 17px;
}

.drop svg {
    display: block;
}

.off {
    opacity: .6;
}

.sep {
    width: 2px;
    height: 22px;
    margin: 6px 3px 0 1px;
    background: #7ba5d8;
}

.dlg-body {
    flex: 1;
    min-height: 0;
    display: flex;
    flex-direction: column;
    padding: 13px 9px 2px;
}

.dlg-body input {
    min-width: 0;
    height: 21px;
    padding: 0 4px;
    border: 1px solid #7ba0cf;
    background: #e6e6e6;
}

.voucher-head {
    display: flex;
    padding-left: 3px;
}

.voucher-head h3 {
    width: 172px;
    font: bold 20px/21px "Open Sans", "Noto Sans", sans-serif;
    white-space: nowrap;
}

.voucher-head .type {
    width: 200px;
    padding: 0 2px;
    margin-right: 24px;
}

.voucher-head .order {
    width: 216px;
    padding-left: 6px;
}

.order::placeholder {
    color: #808080;
    font-style: italic;
    opacity: 1;
}

.info {
    display: flex;
    gap: 10px;
    padding: 10px 2px 0 0;
}

fieldset {
    min-width: 0;
    margin: 0;
    padding: 2px 7px 10px 8px;
    border: 1px solid #7ba0cf;
}

legend {
    padding: 0 3px;
    margin-left: -5px;
    font-weight: bold;
}

.general {
    flex: 1;
}

.voucher {
    width: 204px;
    padding-right: 4px;
}

.row {
    display: flex;
    align-items: center;
    gap: 6px;
    height: 21px;
    margin-bottom: 3px;
}

.row label {
    width: 84px;
}

.voucher .row label {
    width: 80px;
}

.row input, .row .date {
    flex: 1;
}

.row .code {
    flex: none;
    width: 190px;
}

.unit {
    width: 68px;
}

.voucher .row input {
    padding-left: 3px;
}

.date {
    display: flex;
    min-width: 0;
    border: 1px solid #7ba0cf;
    background: #adc7e7;
}

.date input {
    height: 19px;
    border: 0;
}

.date button {
    width: 20px;
    height: 19px;
}

.ref {
    justify-content: space-between;
    margin: 0;
}

.ref button {
    display: flex;
    align-items: center;
    justify-content: center;
    width: 23px;
    height: 23px;
    border: 1px solid #7ba0cf;
}

.collapse {
    display: flex;
    justify-content: center;
    align-items: center;
    flex: none;
    width: 50px;
    height: 8px;
    margin: 1px auto 0;
    border: 1px solid #7ba0cf;
    background: #adc7e7;
    fill: #fff;
}

.tabs {
    display: flex;
    height: 19px;
}

.tabs button {
    padding: 0 12px;
    border: 1px solid #7ba0cf;
    border-bottom: 0;
    border-left: 0;
}

.tabs .active {
    background: #ffe49c;
    font-weight: bold;
}

.items {
    border-top: 1px solid #7ba0cf;
    border-bottom: 1px solid #7ba0cf;
}

.items .grid td:first-child {
    border-right: 1px solid #808080;
}

.items .hscroll {
    border: solid #7ba0cf;
    border-width: 0 1px;
}

.items .hscroll i {
    width: 55%;
}

.totals {
    display: flex;
    height: 18px;
    border-top: 1px solid #7ba0cf;
    border-bottom: 1px solid #7ba0cf;
    background: #efefef;
    line-height: 17px;
}

.totals span {
    padding: 0 2px 0 4px;
    border-right: 1px solid #7ba0cf;
}

.totals .count, .totals .sum, .totals .end {
    background: #d7d7d7;
}

.totals .count {
    border-right-color: #808080;
}

.totals .end {
    padding: 0;
}

.totals .sum {
    text-align: right;
}

.totals .rest {
    flex: 1;
}

.dlg-foot {
    display: flex;
    justify-content: flex-end;
    align-items: flex-end;
    height: 23px;
    background: #adc7e7;
}

/* Windows taskbar */
.taskbar {
    flex: none;
    height: 40px;
    display: flex;
    align-items: center;
    border-top: 1px solid #7fb4d4;
    background:
        radial-gradient(circle at 5px 117px, transparent 124px, rgba(165, 205, 245, .9) 128px, transparent 132px) 660px 0 / 140px 100% no-repeat,
        linear-gradient(100deg, #17507f 0, #1f6496 4%, #3a93c8 12%, #55aedb 28%, #3b98cf 40%, #2b84c6 48%, #2070b5 58%, #1d65ae 70%, #1b5da6 80%, #163f70 82%, #17355f 100%);
}

.taskbar button {
    display: flex;
    align-items: center;
    justify-content: center;
}

.start {
    width: 54px;
    margin-right: 5px;
}

.task {
    width: 60px;
    height: 38px;
    margin-right: 3px;
    border: 1px solid #1d4f78;
    border-radius: 3px;
    background: linear-gradient(135deg, rgba(255, 255, 255, .6), rgba(255, 255, 255, .25));
    box-shadow: inset 0 0 0 1px rgba(255, 255, 255, .6);
}

.task.stacked {
    width: 55px;
    margin-right: 6px;
    box-shadow: inset 0 0 0 1px rgba(255, 255, 255, .6), 3px 0 0 #6fb4dc, 4px 0 0 #1d4f78;
}

.task.on {
    background: linear-gradient(135deg, rgba(255, 255, 255, .9), rgba(255, 255, 255, .5));
}

.task.plain {
    border: 0;
    background: none;
    box-shadow: none;
}

.tray {
    flex: 1;
    display: flex;
    align-items: center;
    justify-content: flex-end;
    gap: 8px;
    color: #fff;
    font: 12px/16px Roboto, "Noto Sans", sans-serif;
}

.lang {
    margin-right: 8px;
}

.tray time {
    margin-left: 8px;
    text-align: center;
}

.tray .peek {
    width: 14px;
    height: 39px;
    margin-left: 4px;
    border: 1px solid #8ca4bd;
    background: linear-gradient(135deg, #5c7796, #1f3d62);
}
```
